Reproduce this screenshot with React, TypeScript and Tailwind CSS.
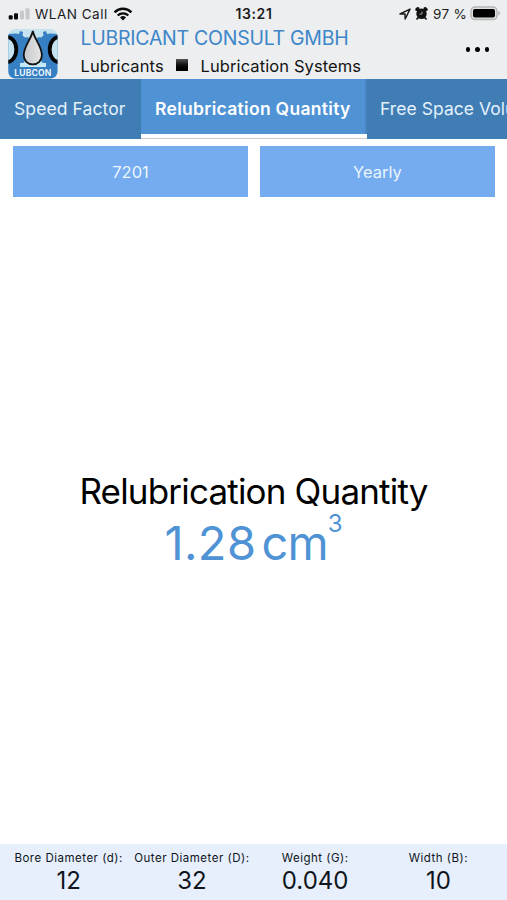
import type { ReactNode } from "react";

function SignalIcon() {
  return (
    <svg className="block h-[12px] w-[23px]" viewBox="0 0 23 12">
      <rect x="0.7" y="7.2" width="4" height="4.3" rx="1" fill="#0b0b0b" />
      <rect x="6" y="5.2" width="4" height="6.3" rx="1" fill="#0b0b0b" />
      <rect x="12" y="2.8" width="4" height="8.7" rx="1" fill="#c6c8ca" />
      <rect x="17.5" y="0.3" width="4" height="11.2" rx="1" fill="#c6c8ca" />
    </svg>
  );
}

function WifiIcon() {
  return (
    <svg className="block h-[14px] w-[20px]" viewBox="0 0 20 14" fill="none" stroke="#0b0b0b">
      <path d="M1.6 5.3a12 12 0 0 1 16.8 0" strokeWidth="2.5" />
      <path d="M4.7 8.5a7.6 7.6 0 0 1 10.6 0" strokeWidth="2.3" />
      <path d="M10 13.6 7 10.5a4.3 4.3 0 0 1 6 0Z" fill="#0b0b0b" stroke="none" />
    </svg>
  );
}

function LocationIcon() {
  return (
    <svg className="block h-[12px] w-[12px]" viewBox="0 0 12 12">
      <path d="M1 6 11 1.1 6.2 11 6 6.1Z" fill="none" stroke="#1b1b1b" strokeWidth="1.5" strokeLinejoin="round" />
    </svg>
  );
}

function AlarmIcon() {
  return (
    <svg className="block h-[13px] w-[13px]" viewBox="0 0 13 13">
      <path d="M3 10.8 2 11.8M10 10.8l1 1" stroke="#111" strokeWidth="1.7" strokeLinecap="round" />
      <path d="M.9 4A2.2 2.2 0 0 1 4.6 1.1L4 4ZM12.1 4A2.2 2.2 0 0 0 8.4 1.1L9 4Z" fill="#111" />
      <circle cx="6.5" cy="6.8" r="5.2" fill="#111" />
      <path d="M7 4.4v2.7H4.4" fill="none" stroke="#a9abad" strokeWidth="0.9" />
    </svg>
  );
}

function BatteryIcon() {
  return (
    <svg className="block h-[15px] w-[31px]" viewBox="0 0 31 15">
      <rect x="1" y="1" width="26" height="12.6" rx="4" fill="#dfe1e1" stroke="#b4b6b6" strokeWidth="1.5" />
      <rect x="3" y="3" width="22" height="8.6" rx="2" fill="#000" />
      <path d="M28.4 5v4.6c1.1-.4 1.6-1.2 1.6-2.3s-.5-1.9-1.6-2.3Z" fill="#b4b6b6" />
    </svg>
  );
}

function Logo() {
  return (
    <svg className="block h-[50px] w-[50px]" viewBox="0 0 50 50">
      <defs>
        <clipPath id="badge">
          <rect x="0.3" y="0" width="49.2" height="49.5" rx="7" />
        </clipPath>
        <linearGradient id="drop" x1="0" x2="1">
          <stop offset="0" stopColor="#c5c7c9" />
          <stop offset="1" stopColor="#e7e6e5" />
        </linearGradient>
      </defs>
      <g clipPath="url(#badge)">
        <rect width="50" height="50" fill="#c5e3ee" />
        <path d="M0 5 8 4.5 11 5 12 2 15 3 14.5 6.5 17 8.5 20 8 21.5 11 19 13.5 20 17 22 20V33L13 34 12 38H0Z" fill="#367fc2" />
        <path d="M50 5 42 4.5 39 5 38 2 35 3 35.5 6.5 33 8.5 30 8 28.5 11 31 13.5 30 17 28 20V33L37 34 38 38H50Z" fill="#367fc2" />
        <path d="M12 38V34h4l1-3h16l1 3h4v4Z" fill="#c5e9f7" />
        <ellipse cx="-1" cy="20.5" rx="9.3" ry="12.5" fill="#c5e3ee" stroke="#050505" strokeWidth="3.8" />
        <ellipse cx="51" cy="20.5" rx="9.3" ry="12.5" fill="#c5e3ee" stroke="#050505" strokeWidth="3.8" />
        <path
          d="M24.8 2C23.5 9.5 15.7 17.5 15.7 26c0 5.6 4 9.4 9.1 9.4s9.1-3.8 9.1-9.4C33.9 17.5 26.1 9.5 24.8 2Z"
          fill="url(#drop)"
          stroke="#111"
          strokeWidth="1.8"
        />
        <rect y="38" width="50" height="12" fill="#367fc2" />
        <text
          x="24.8"
          y="46.6"
          textAnchor="middle"
          fontFamily="Inter, sans-serif"
          fontWeight="700"
          fontSize="8.6"
          letterSpacing="0.12"
          fill="#e9f4fc"
        >
          LUBCON
        </text>
      </g>
    </svg>
  );
}

function StatusBar() {
  return (
    <div className="flex h-[27px] items-center text-[13.5px] text-[#1c1c1e]">
      <div className="flex flex-1 items-center pl-[8px]">
        <SignalIcon />
        <span className="ml-[4px] w-[78px] whitespace-nowrap pt-[1px] tracking-[0.5px]">WLAN Call</span>
        <WifiIcon />
      </div>
      <span className="w-[38px] whitespace-nowrap text-[14px] font-semibold tracking-[0.6px]">13:21</span>
      <div className="flex flex-1 items-center justify-end pr-[6px]">
        <LocationIcon />
        <span className="ml-[4px]">
          <AlarmIcon />
        </span>
        <span className="ml-[5px] w-[37px] whitespace-nowrap pt-[1px] tracking-[0.3px]">97 %</span>
        <BatteryIcon />
      </div>
    </div>
  );
}

function Header() {
  return (
    <div className="flex h-[52px] pl-[8px] pt-[1px]">
      <div className="pt-[1px]">
        <Logo />
      </div>
      <div className="ml-[22.5px] flex-1 whitespace-nowrap">
        <div className="h-[22px] text-[19.5px] leading-[21px] tracking-[-0.26px] text-[#3d86c8]">LUBRICANT CONSULT GMBH</div>
        <div className="flex h-[26px] items-center pt-[6px] text-[16.5px] tracking-[0.1px] text-[#141414]">
          <span className="w-[95px]">Lubricants</span>
          <span className="-mt-[2px] h-[12px] w-[12px] bg-linear-to-b from-[#555] via-[#111] to-black" />
          <span className="ml-[13px]">Lubrication Systems</span>
        </div>
      </div>
      <div className="flex gap-[5px] pr-[18px] pt-[19px]">
        <span className="h-[4.5px] w-[4.5px] rounded-full bg-black" />
        <span className="h-[4.5px] w-[4.5px] rounded-full bg-black" />
        <span className="h-[4.5px] w-[4.5px] rounded-full bg-black" />
      </div>
    </div>
  );
}

function Tabs() {
  return (
    <div className="flex h-[60px] overflow-hidden whitespace-nowrap text-[17.5px] text-[#e3f1fc]">
      <div className="h-full w-[141px] shrink-0 bg-[#417db5] pl-[14px] leading-[60px] tracking-[0.1px]">Speed Factor</div>
      <div className="flex h-full w-[226px] shrink-0 flex-col border-b border-[#c9c9cc] bg-white">
        <div className="h-[55px] border-r-2 border-[#4786c0] bg-[#4f93d5] pl-[14px] font-semibold leading-[60px] tracking-[0.3px] text-white">
          Relubrication Quantity
        </div>
      </div>
      <div className="h-full w-[226px] shrink-0 bg-[#417db5] pl-[13px] leading-[60px] tracking-[0.05px]">Free Space Volume</div>
    </div>
  );
}

function Choice({ children }: { children: ReactNode }) {
  return (
    <button className="h-[51px] flex-1 bg-[#75acef] pt-[1px] text-[16.5px] text-[#eaf5ff]">{children}</button>
  );
}

const stats = [
  { label: "Bore Diameter (d):", value: "12" },
  { label: "Outer Diameter (D):", value: "32" },
  { label: "Weight (G):", value: "0.040" },
  { label: "Width (B):", value: "10" },
];

export default function App() {
  return (
    <div className="flex h-[900px] w-[507px] flex-col overflow-hidden bg-white font-['Inter',sans-serif]">
      <header className="bg-[#eceef0]">
        <StatusBar />
        <Header />
      </header>
      <Tabs />
      <div className="flex gap-[12px] pl-[13px] pr-[12px] pt-[7px]">
        <Choice>7201</Choice>
        <Choice>Yearly</Choice>
      </div>
      <main className="flex flex-1 flex-col items-center whitespace-nowrap pt-[270px]">
        <h1 className="h-[49px] text-[35px] leading-[48px] tracking-[-0.82px] text-black">Relubrication Quantity</h1>
        <div className="flex h-[60px] text-[47px] leading-[54px] text-[#4f93d5]">
          <span className="tracking-[0.4px]">1.28</span>
          <span className="ml-[5px] tracking-[-0.8px]">cm</span>
          <span className="h-[18px] text-[24px] leading-[16px]">3</span>
        </div>
      </main>
      <footer className="flex h-[56px] bg-[#e6effb] px-[7px] text-center text-[#10151c]">
        {stats.map((s) => (
          <div key={s.label} className="flex-1 whitespace-nowrap pt-[6px]">
            <div className="text-[11.5px] leading-[16px] tracking-[0.5px]">{s.label}</div>
            <div className="text-[24px] leading-[29px]">{s.value}</div>
          </div>
        ))}
      </footer>
    </div>
  );
}
